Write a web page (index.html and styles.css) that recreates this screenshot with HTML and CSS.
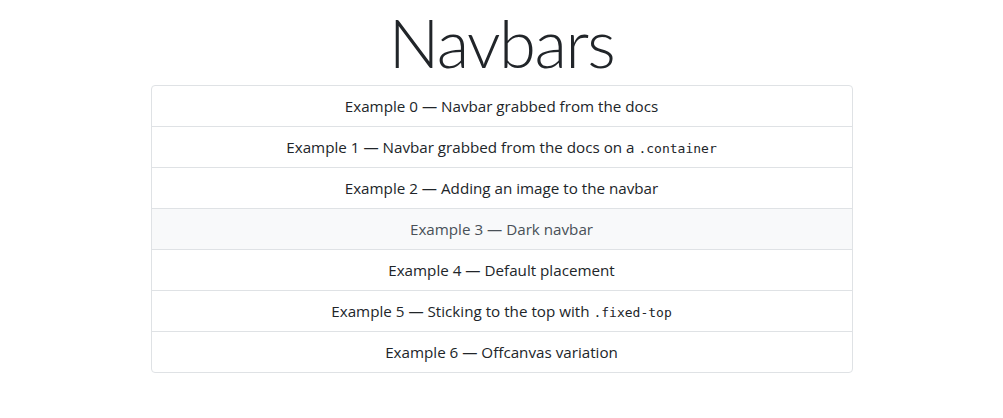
FILE: index.html
```html
<!DOCTYPE html>
<html lang="en">
<head>
<meta charset="utf-8">
<title>Navbars</title>
<link rel="stylesheet" href="styles.css">
</head>
<body>
<main class="page">
  <h1 class="title">Navbars</h1>
  <div class="list">
    <a class="item" href="#">Example 0 — Navbar grabbed from the docs</a>
    <a class="item" href="#">Example 1 — Navbar grabbed from the docs on a <code>.container</code></a>
    <a class="item" href="#">Example 2 — Adding an image to the navbar</a>
    <a class="item item-hover" href="#">Example 3 — Dark navbar</a>
    <a class="item" href="#">Example 4 — Default placement</a>
    <a class="item" href="#">Example 5 — Sticking to the top with <code>.fixed-top</code></a>
    <a class="item" href="#">Example 6 — Offcanvas variation</a>
  </div>
</main>
</body>
</html>
```
FILE: styles.css
```css
html, body {
  margin: 0;
  padding: 0;
  background: #fff;
}
body {
  font-family: "Open Sans", "Noto Sans", sans-serif;
  font-size: 15.2px;
  color: #212529;
}
.page {
  display: flex;
  flex-direction: column;
  align-items: center;
}
.title {
  margin: 0 0 1px;
  font-family: Lato, "Open Sans", sans-serif;
  font-size: 67px;
  font-weight: 300;
  line-height: 84px;
  letter-spacing: -1.5px;
  color: #212529;
}
.list {
  width: 702px;
  display: flex;
  flex-direction: column;
  border: 1px solid #dfe2e5;
  border-radius: 4px;
  overflow: hidden;
  box-sizing: border-box;
}
.item {
  display: block;
  padding: 8px 16px;
  height: 24px;
  line-height: 24px;
  text-align: center;
  color: #212529;
  text-decoration: none;
  border-top: 1px solid #dfe2e5;
}
.item:first-child {
  border-top: 0;
}
.item-hover {
  background: #f8f9fa;
  color: #495057;
}
code {
  font-family: "DejaVu Sans Mono", "Liberation Mono", monospace;
  font-size: 13px;
  line-height: 1;
  color: #212529;
}
```
